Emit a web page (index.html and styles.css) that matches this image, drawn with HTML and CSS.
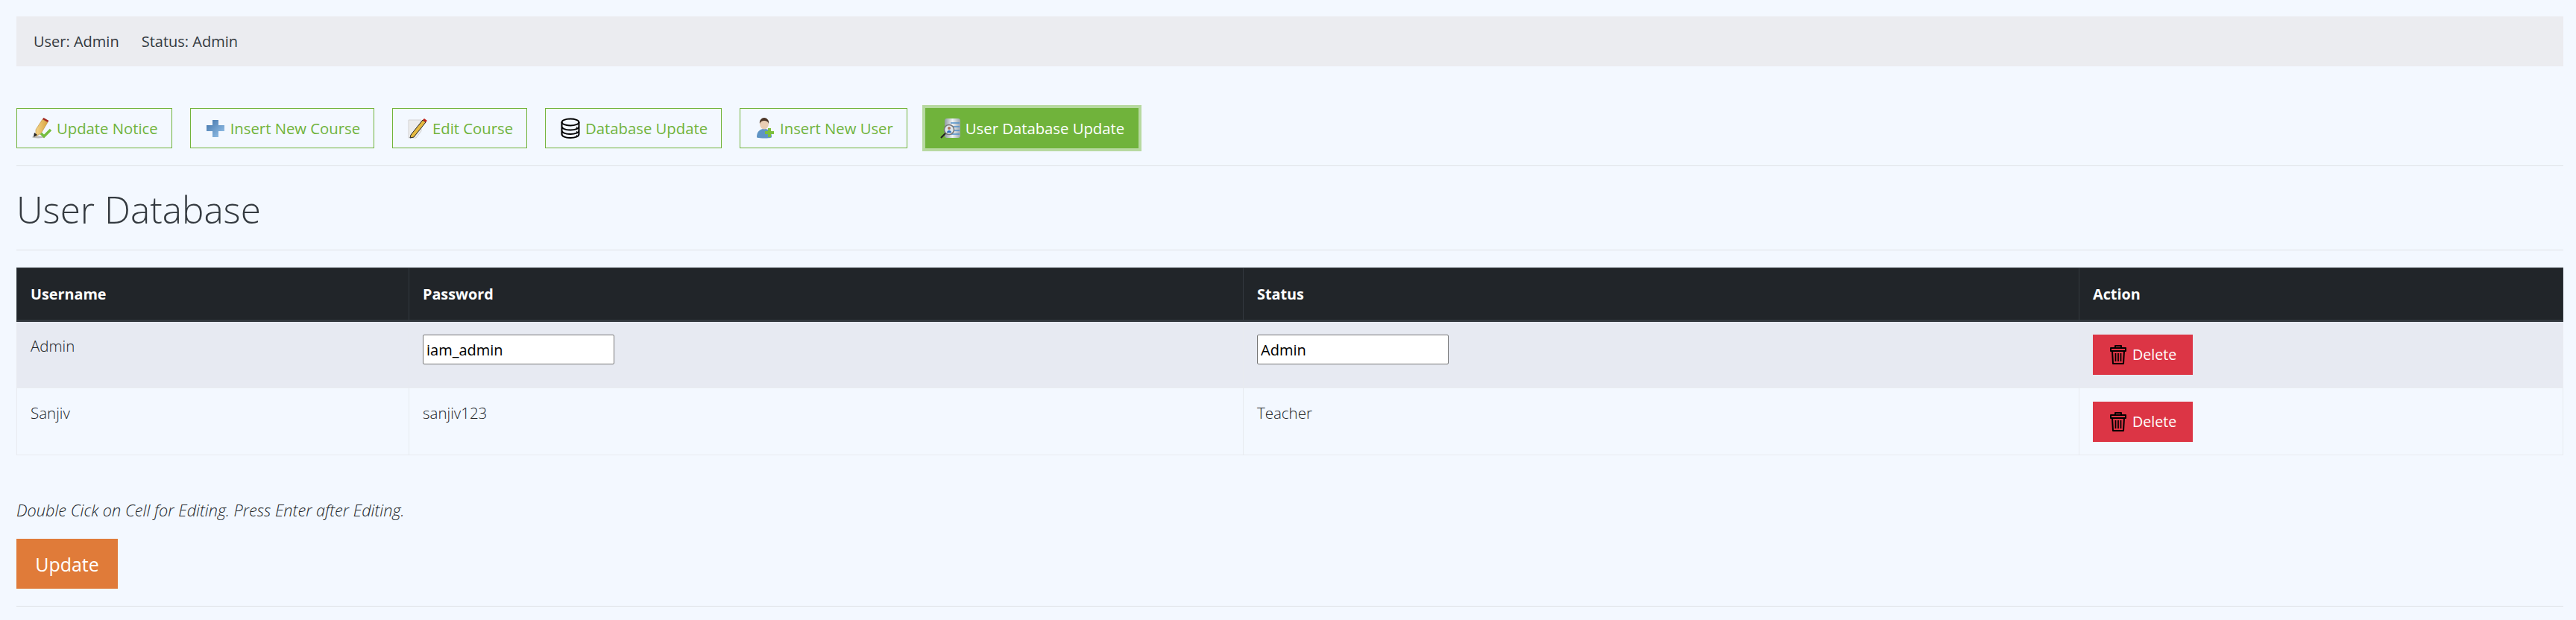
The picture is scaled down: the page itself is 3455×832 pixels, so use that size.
FILE: index.html
```html
<!DOCTYPE html>
<html lang="en">
<head>
<meta charset="utf-8">
<title>User Database</title>
<link rel="stylesheet" href="styles.css">
</head>
<body>
<svg class="defs" width="0" height="0" aria-hidden="true">
  <defs>
    <linearGradient id="plusBlue" x1="0" y1="0" x2="1" y2="1">
      <stop offset="0" stop-color="#3f71a8"/><stop offset="1" stop-color="#9cc8ee"/>
    </linearGradient>
    <linearGradient id="pencilGold" x1="0" y1="0" x2="1" y2="0">
      <stop offset="0" stop-color="#f3d48a"/><stop offset="1" stop-color="#d9a53d"/>
    </linearGradient>
    <linearGradient id="steel" x1="0" y1="0" x2="1" y2="0">
      <stop offset="0" stop-color="#8f9aa3"/><stop offset=".5" stop-color="#eef2f5"/><stop offset="1" stop-color="#9aa5ad"/>
    </linearGradient>
    <symbol id="trash" viewBox="0 0 24 28">
      <path d="M8 5V2h8v3M2 5h20v4H2zM4 9l1 17h14l1-17" fill="none" stroke="#000" stroke-width="2" stroke-linejoin="round"/>
      <path d="M8.500 12v11M12 12v11M15.500 12v11" fill="none" stroke="#000" stroke-width="1.700"/>
    </symbol>
  </defs>
</svg>
<div class="status-bar"><span>User: Admin</span><span>Status: Admin</span></div>
<nav class="tabs">
  <a class="tab tab-notice" href="#">
    <svg class="icon" viewBox="0 0 28 28"><ellipse cx="9" cy="26" rx="8" ry="1.500" fill="#bbb"/><path d="M6 16 15 2l7 4-9 15-7 4z" fill="url(#pencilGold)" stroke="#b98a35" stroke-width=".6"/><path d="M15 2l1.500-2 7 4L22 6z" fill="#a3271f"/><path d="M3 26l1-6 4 3z" fill="#222"/><path d="M13 21l4 4 9-9" fill="none" stroke="#76bd3e" stroke-width="3.500"/></svg>
    Update Notice
  </a>
  <a class="tab tab-course" href="#">
    <svg class="icon" viewBox="0 0 28 28"><path d="M10 3h8v7h8v8h-8v8h-8v-8H2v-8h8z" fill="url(#plusBlue)"/></svg>
    Insert New Course
  </a>
  <a class="tab tab-edit" href="#">
    <svg class="icon" viewBox="0 0 28 28"><path d="M2 3h17v15l-7 9H2z" fill="#ececec" stroke="#d2d2d2"/><path d="M5 23 21 3l4 3L9 26l-5 1z" fill="#e5b93f" stroke="#222" stroke-width="1"/><path d="M21 3l2-2 4 3-2 2z" fill="#c0231c"/></svg>
    Edit Course
  </a>
  <a class="tab tab-db" href="#">
    <svg class="icon" viewBox="0 0 28 28"><g fill="none" stroke="#000" stroke-width="2"><ellipse cx="14" cy="6" rx="11.500" ry="4.500"/><path d="M2.500 6v16c0 3 5 5 11.500 5s11.500-2 11.500-5V6M2.500 11.500c0 3 5 5 11.500 5s11.500-2 11.500-5M2.500 17c0 3 5 5 11.500 5s11.500-2 11.500-5"/></g><path d="M22 13h1M22 19h1M22 24h1" stroke="#000" stroke-width="1.500"/></svg>
    Database Update
  </a>
  <a class="tab tab-user" href="#">
    <svg class="icon" viewBox="0 0 28 28"><path d="M3 26c0-6 3-10 8-11h4c5 1 8 5 8 11 0 2-20 2-20 0z" fill="#5f94c4"/><ellipse cx="13" cy="8" rx="6" ry="7.500" fill="#e9cdb4"/><path d="M7 8c-1-5 3-8 6-8s7 3 6 8c-1-3-3-4-6-4s-5 1-6 4z" fill="#4b3527"/><path d="M18 14h4v4h4v4h-4v4h-4v-4h-4v-4h4z" fill="#7cbf3c"/></svg>
    Insert New User
  </a>
  <a class="tab tab-active" href="#">
    <svg class="icon" viewBox="0 0 28 28"><rect x="6" y="1" width="21" height="26" rx="3" fill="url(#steel)"/><path d="M14 7h12M15 12h11M16 17h10M14 22h12" stroke="#4f8fc9" stroke-width="1.300"/><circle cx="12" cy="16" r="6.500" fill="#dfe7ee" stroke="#777" stroke-width="1.500"/><circle cx="12" cy="14" r="2" fill="#a9745a"/><path d="M9 20c0-4 6-4 6 0z" fill="#2a69b8"/><path d="M7 21l-6 6" stroke="#222" stroke-width="2.200"/></svg>
    User Database Update
  </a>
</nav>
<hr class="rule rule-tabs">
<h1 class="title">User Database</h1>
<hr class="rule rule-title">
<table class="users">
  <colgroup><col class="col-user"><col class="col-pass"><col class="col-status"><col class="col-action"></colgroup>
  <thead>
    <tr><th>Username</th><th>Password</th><th>Status</th><th>Action</th></tr>
  </thead>
  <tbody>
    <tr class="row-odd">
      <td>Admin</td>
      <td><input class="cell-input" type="text" value="iam_admin"></td>
      <td><input class="cell-input" type="text" value="Admin"></td>
      <td><a class="delete" href="#"><svg class="trash"><use href="#trash"/></svg>Delete</a></td>
    </tr>
    <tr class="row-even">
      <td>Sanjiv</td>
      <td>sanjiv123</td>
      <td>Teacher</td>
      <td><a class="delete" href="#"><svg class="trash"><use href="#trash"/></svg>Delete</a></td>
    </tr>
  </tbody>
</table>
<p class="hint">Double Cick on Cell for Editing. Press Enter after Editing.</p>
<button class="update" type="button">Update</button>
<hr class="rule rule-end">
</body>
</html>
```
FILE: styles.css
```css
* { box-sizing: border-box; }
html, body { margin: 0; }
body {
  padding: 22px 17px 0 22px;
  background: #f3f8ff;
  color: #212529;
  font-family: "Open Sans", "Noto Sans", sans-serif;
  font-size: 20px;
  font-weight: 300;
  line-height: 1.5;
  overflow: hidden;
}
.defs { position: absolute; }
.status-bar {
  display: flex;
  gap: 30px;
  align-items: center;
  height: 67px;
  padding-left: 23px;
  background: #ebecf0;
  font-weight: 400;
  color: #343a40;
}
.tabs {
  display: flex;
  gap: 24px;
  margin-top: 56px;
}
.tab {
  display: flex;
  align-items: center;
  gap: 6px;
  height: 54px;
  padding: 0 18px 0 19px;
  border: 1px solid #70b33b;
  color: #70b33b;
  font-size: 20.300px;
  text-decoration: none;
  font-weight: 400;
  white-space: nowrap;
}
.icon { width: 28px; height: 28px; flex: none; }
.tab-active {
  background: #70b33b;
  color: #fff;
  box-shadow: 0 0 0 4px #b7d9a0;
}
.rule { margin: 0; border: 0; border-top: 1px solid #dee2e6; }
.rule-tabs { margin-top: 23px; }
.title {
  margin: 0;
  height: 112px;
  padding-top: 25px;
  font-size: 49.500px;
  font-weight: 300;
  line-height: 66px;
  color: #343a40;
}
.rule-title { margin-bottom: 23px; }
.users {
  width: 100%;
  border-collapse: collapse;
  table-layout: fixed;
}
.col-user { width: 526px; }
.col-pass { width: 1119px; }
.col-status { width: 1121px; }
.users th, .users td {
  padding: 17px 18px;
  text-align: left;
  vertical-align: top;
  border: 1px solid #e8ebf0;
}
.users td { font-size: 20.500px; height: 90px; }
.users .row-even td { padding-top: 18px; }
.users th {
  height: 71px;
  padding-top: 20px;
  background: #212529;
  border-color: #32383e;
  border-bottom-width: 3px;
  color: #fff;
  font-weight: 700;
  font-size: 19.800px;
}
.row-odd td { background: #e7eaf2; }
.cell-input {
  display: block;
  width: 257px;
  height: 40px;
  padding: 2px 4px;
  border: 1px solid #767676;
  border-radius: 2px;
  background: #fff;
  color: #000;
  font: 400 20px "Open Sans", sans-serif;
}
.delete {
  display: inline-flex;
  align-items: center;
  gap: 7px;
  width: 134px;
  height: 54px;
  padding-left: 22px;
  background: #dc3545;
  color: #fff;
  font-size: 19.600px;
  text-decoration: none;
  font-weight: 400;
}
.trash { width: 24px; height: 28px; flex: none; }
.hint {
  margin: 58px 0 22px;
  height: 32px;
  font-size: 21.700px;
  font-style: italic;
  line-height: 32px;
}
.update {
  display: block;
  width: 136px;
  height: 67px;
  padding: 0;
  border: 0;
  background: #e07b39;
  color: #fff;
  font: 400 25px "Open Sans", sans-serif;
}
.rule-end { margin-top: 23px; }
```
